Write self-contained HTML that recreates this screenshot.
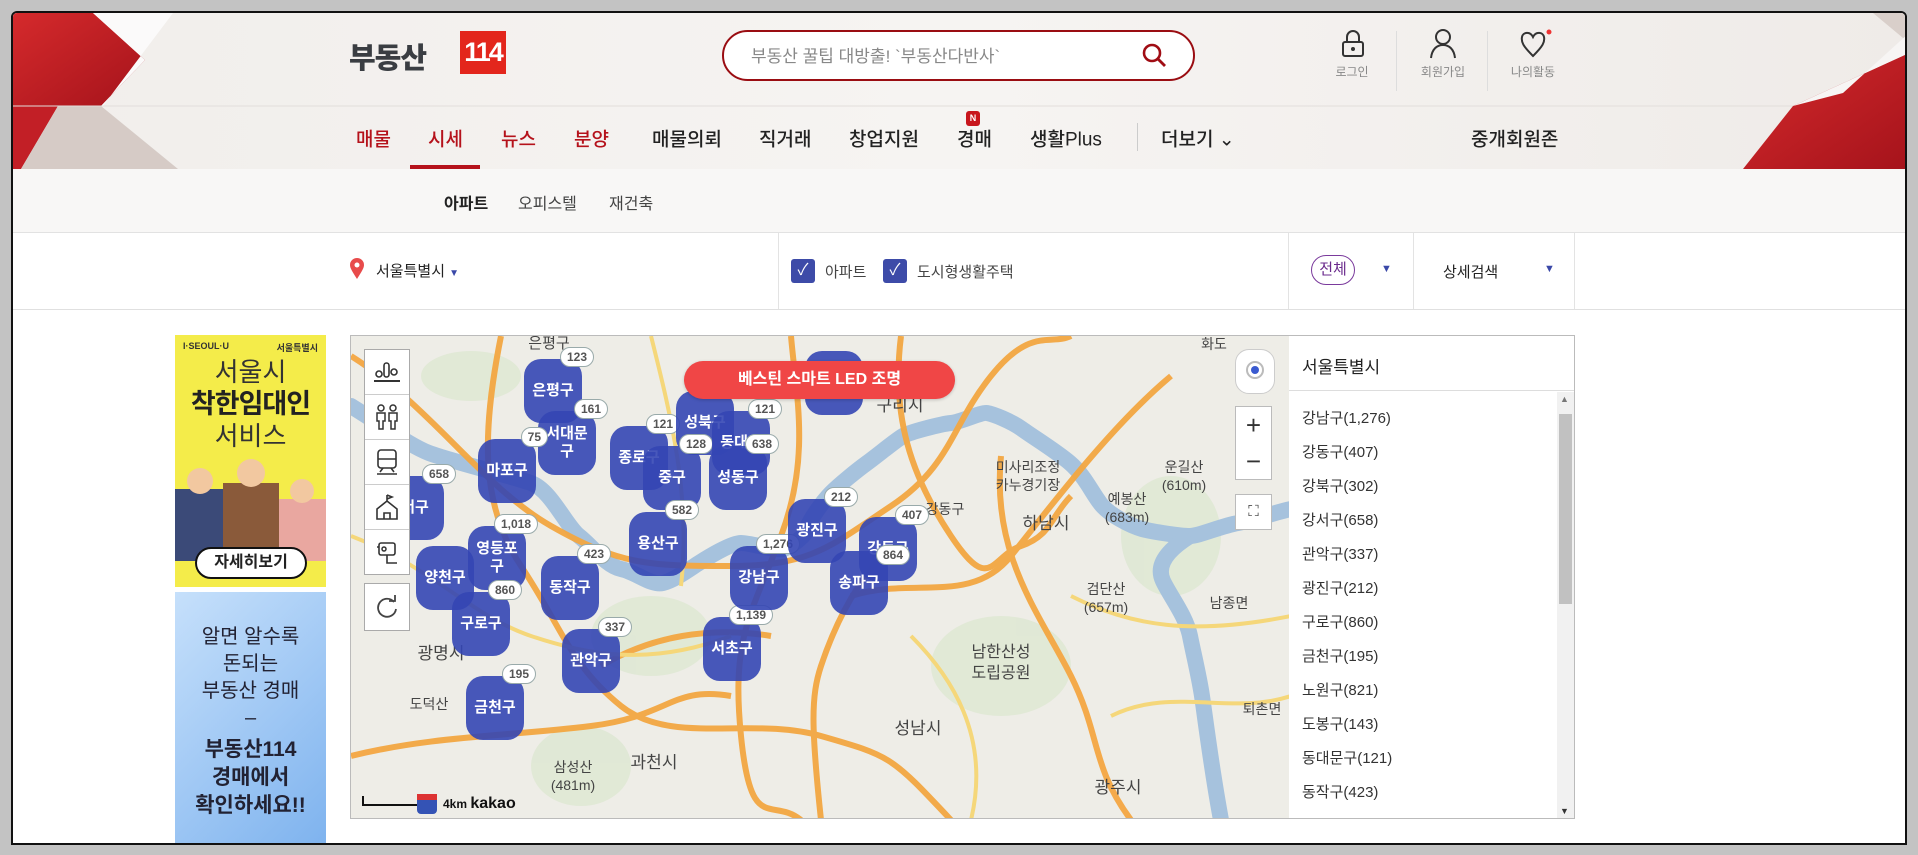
<!DOCTYPE html>
<html><head><meta charset="utf-8">
<style>
*{margin:0;padding:0;box-sizing:border-box}
body{width:1918px;height:855px;background:#c3c3c3;font-family:"Liberation Sans","Noto Sans CJK KR",sans-serif;position:relative;overflow:hidden;color:#222}
.abs{position:absolute}
#page{position:absolute;left:11px;top:11px;width:1896px;height:834px;background:#fff;border:2px solid #111;border-radius:6px 6px 0 0;overflow:hidden}
#hdr{position:absolute;left:0;top:0;width:1896px;height:156px;background:linear-gradient(90deg,#f1eeeb,#f6f4f2 50%,#efebe8)}
.nav{position:absolute;top:125px;font-size:19px;font-weight:500;transform:translateY(-50%)}
.red{color:#b5121b}
.ic{position:absolute;text-align:center;font-size:12px;color:#888;width:60px}
.mk{position:absolute;width:58px;height:64px;background:rgba(52,70,180,.9);border-radius:17px;color:#fff;font-size:15px;font-weight:bold;display:flex;align-items:center;justify-content:center;text-align:center;line-height:18px}
.bd{position:absolute;background:#fff;border:1px solid #9aa;border-radius:11px;font-size:12px;color:#555;padding:0 6px;height:20px;line-height:18px;top:-12px;right:-12px}
.li{position:absolute;left:13px;font-size:15px;color:#333}
.mt{position:absolute;font-size:14px;color:#444;transform:translate(-50%,-50%);white-space:nowrap;text-align:center;line-height:18px}
.cb{position:absolute;width:44px;height:45px;border-bottom:1px solid #ccc;display:flex;align-items:center;justify-content:center}
</style></head><body>
<div id="page">
<div id="hdr">
 <svg class="abs" style="left:0;top:0" width="1896" height="156">
  <defs><linearGradient id="rg" x1="0" y1="0" x2="1" y2="1"><stop offset="0" stop-color="#d52a2c"/><stop offset="1" stop-color="#a5131b"/></linearGradient></defs>
  <polygon points="0,0 80,0 132,47 88,93 0,93" fill="url(#rg)"/>
  <polygon points="80,0 160,0 90,93 88,93 132,47" fill="#fbfafa"/>
  <polygon points="0,93 45,93 8,156 0,156" fill="#c21f26"/>
  <polygon points="45,93 88,93 165,156 8,156" fill="#d6cbc6"/>
  <line x1="0" y1="93" x2="1896" y2="93" stroke="#e2dedb" stroke-width="1"/>
  <polygon points="1860,0 1896,0 1896,30" fill="#d9cfca"/>
  <polygon points="1896,40 1896,156 1730,156 1780,93" fill="url(#rg)"/>
  <polygon points="1830,80 1896,20 1896,40 1780,93" fill="#f7f5f4"/>
 </svg>
 <div class="abs" style="left:336px;top:22px;font-size:29px;font-weight:900;color:#3a3d42;letter-spacing:-1px">부동산</div>
 <div class="abs" style="left:447px;top:18px;width:46px;height:43px;background:#e3261c;color:#fff;font-size:27px;font-weight:bold;text-align:center;line-height:43px;letter-spacing:-2px">114</div>
 <div class="abs" style="left:709px;top:17px;width:473px;height:51px;border:2px solid #9a0d12;border-radius:26px;background:#fff"></div>
 <div class="abs" style="left:738px;top:29px;font-size:17px;color:#888">부동산 꿀팁 대방출! `부동산다반사`</div>
 <svg class="abs" style="left:1127px;top:28px" width="30" height="30"><circle cx="12" cy="12" r="8" fill="none" stroke="#a00d14" stroke-width="2.6"/><line x1="18" y1="18" x2="25" y2="25" stroke="#a00d14" stroke-width="2.8"/></svg>
 <svg class="abs" style="left:1325px;top:15px" width="30" height="32"><path d="M9 14V9a6 6 0 0 1 12 0v5" fill="none" stroke="#333" stroke-width="2"/><rect x="5" y="14" width="20" height="14" rx="2" fill="none" stroke="#333" stroke-width="2"/><circle cx="15" cy="21" r="2" fill="#333"/></svg>
 <div class="ic" style="left:1309px;top:50px">로그인</div>
 <div class="abs" style="left:1383px;top:18px;width:1px;height:60px;background:#ddd"></div>
 <svg class="abs" style="left:1415px;top:14px" width="30" height="34"><circle cx="15" cy="10" r="7" fill="none" stroke="#333" stroke-width="2"/><path d="M3 31c1-9 6-13 12-13s11 4 12 13" fill="none" stroke="#333" stroke-width="2"/></svg>
 <div class="ic" style="left:1400px;top:50px">회원가입</div>
 <div class="abs" style="left:1474px;top:18px;width:1px;height:60px;background:#ddd"></div>
 <svg class="abs" style="left:1506px;top:15px" width="34" height="32"><path d="M14 28C4 18 2 14 3 9 4 4 11 3 14 9 17 3 24 4 25 9 26 14 24 18 14 28Z" fill="none" stroke="#333" stroke-width="2"/><circle cx="30" cy="4" r="2.5" fill="#e33"/></svg>
 <div class="ic" style="left:1490px;top:50px">나의활동</div>

 <div class="nav red" style="left:343px">매물</div>
 <div class="nav red" style="left:415px">시세</div>
 <div class="abs" style="left:397px;top:152px;width:70px;height:4px;background:#b5121b"></div>
 <div class="nav red" style="left:488px">뉴스</div>
 <div class="nav red" style="left:561px">분양</div>
 <div class="nav" style="left:639px">매물의뢰</div>
 <div class="nav" style="left:746px">직거래</div>
 <div class="nav" style="left:836px">창업지원</div>
 <div class="nav" style="left:944px">경매</div>
 <div class="abs" style="left:953px;top:98px;width:14px;height:15px;background:#c8161d;border-radius:3px;color:#fff;font-size:9px;font-weight:bold;text-align:center;line-height:15px">N</div>
 <div class="nav" style="left:1017px">생활Plus</div>
 <div class="abs" style="left:1124px;top:110px;width:1px;height:28px;background:#ccc"></div>
 <div class="nav" style="left:1148px">더보기 ⌄</div>
 <div class="nav" style="left:1458px">중개회원존</div>
</div>
<div class="abs" style="left:0;top:156px;width:1896px;height:64px;background:#f8f7f6;border-bottom:1px solid #e2e2e2"></div>
<div class="abs" style="left:431px;top:177px;font-size:16px;font-weight:bold">아파트</div>
<div class="abs" style="left:505px;top:177px;font-size:16px;color:#444">오피스텔</div>
<div class="abs" style="left:596px;top:177px;font-size:16px;color:#444">재건축</div>

<div class="abs" style="left:0;top:296px;width:1896px;height:1px;background:#e0e0e0"></div>
<svg class="abs" style="left:336px;top:245px" width="16" height="22"><path d="M8 21C3 13 1 10 1 7a7 7 0 0 1 14 0c0 3-2 6-7 14Z" fill="#e84b4b"/><circle cx="8" cy="7" r="2.5" fill="#fff"/></svg>
<div class="abs" style="left:363px;top:247px;font-size:15px">서울특별시 <span style="color:#3a48a8;font-size:10px">▼</span></div>
<div class="abs" style="left:765px;top:220px;width:1px;height:76px;background:#e3e3e3"></div>
<div class="abs" style="left:778px;top:246px;width:24px;height:24px;background:#3d4ba8;border-radius:3px;color:#fff;text-align:center;line-height:24px;font-size:16px">✓</div>
<div class="abs" style="left:812px;top:248px;font-size:15px;color:#444">아파트</div>
<div class="abs" style="left:870px;top:246px;width:24px;height:24px;background:#3d4ba8;border-radius:3px;color:#fff;text-align:center;line-height:24px;font-size:16px">✓</div>
<div class="abs" style="left:904px;top:248px;font-size:15px;color:#444">도시형생활주택</div>
<div class="abs" style="left:1275px;top:220px;width:1px;height:76px;background:#e3e3e3"></div>
<div class="abs" style="left:1298px;top:242px;width:44px;height:30px;border:1px solid #7a3a9c;border-radius:15px;color:#6a2a8c;font-size:15px;text-align:center;line-height:28px">전체</div>
<div class="abs" style="left:1368px;top:250px;color:#3a48a8;font-size:11px">▼</div>
<div class="abs" style="left:1400px;top:220px;width:1px;height:76px;background:#e3e3e3"></div>
<div class="abs" style="left:1430px;top:248px;font-size:15px">상세검색</div>
<div class="abs" style="left:1531px;top:250px;color:#3a48a8;font-size:11px">▼</div>
<div class="abs" style="left:1561px;top:220px;width:1px;height:76px;background:#e3e3e3"></div>

<!-- ads -->
<div class="abs" style="left:162px;top:322px;width:151px;height:252px;background:#f4ec4a;overflow:hidden;text-align:center">
 <div style="font-size:9px;font-weight:bold;text-align:left;padding:6px 8px;color:#333">I·SEOUL·U <span style="float:right">서울특별시</span></div>
 <div style="font-size:26px;color:#333;line-height:30px">서울시</div>
 <div style="font-size:27px;font-weight:bold;color:#222;line-height:34px;letter-spacing:-1px">착한임대인</div>
 <div style="font-size:26px;color:#333;line-height:30px">서비스</div>
 <svg width="151" height="110" style="display:block"><rect x="0" y="38" width="50" height="72" fill="#3b4a78"/><circle cx="25" cy="30" r="13" fill="#f2c8a0"/><rect x="48" y="32" width="56" height="78" fill="#8a5a3a"/><circle cx="76" cy="22" r="14" fill="#f2c8a0"/><rect x="104" y="48" width="47" height="62" fill="#e9a7a0"/><circle cx="127" cy="40" r="12" fill="#f2c8a0"/></svg>
 <div class="abs" style="left:20px;top:212px;width:112px;height:32px;background:#fff;border:2px solid #111;border-radius:16px;font-size:16px;font-weight:bold;line-height:28px">자세히보기</div>
</div>
<div class="abs" style="left:162px;top:579px;width:151px;height:260px;background:linear-gradient(135deg,#c6e0fb,#7db2ee);text-align:center;color:#223">
 <div style="margin-top:32px;font-size:20px;line-height:27px">알면 알수록<br>돈되는<br>부동산 경매<br>–</div>
 <div style="font-size:21px;font-weight:bold;line-height:28px;margin-top:4px">부동산114<br>경매에서<br>확인하세요!!</div>
</div>

<!-- map -->
<div class="abs" style="left:337px;top:322px;width:940px;height:484px;border:1px solid #bbb;overflow:hidden;background:#eeede7">
<svg width="940" height="484" style="position:absolute;left:0;top:0">
 <g fill="#dde7d2" opacity=".8"><ellipse cx="300" cy="300" rx="60" ry="40"/><ellipse cx="650" cy="330" rx="70" ry="50"/><ellipse cx="230" cy="430" rx="50" ry="40"/><ellipse cx="820" cy="200" rx="50" ry="60"/><ellipse cx="120" cy="40" rx="50" ry="25"/></g>
 <path d="M0 70 C40 95 60 110 78 117 S160 140 180 147 S215 190 228 200 S255 230 270 233 S300 250 312 247 S340 232 348 227 S380 207 390 207 S425 215 432 213 S455 200 456 193 S472 165 480 157 S505 135 516 127 S545 104 552 100 S590 88 600 87 S630 76 636 77 S660 85 671 93 S705 115 719 127 S740 155 749 167 S780 190 791 193 S830 200 839 200 S870 190 887 187 S925 176 940 173" fill="none" stroke="#a6c2dd" stroke-width="16" stroke-linecap="round"/>
 <path d="M839 200 C815 215 805 230 812 245 S835 280 839 300 S848 340 851 360 S860 430 870 484" fill="none" stroke="#a6c2dd" stroke-width="16"/>
 <g fill="none" stroke="#f3a742" stroke-width="6" opacity=".95">
  <path d="M0 20 C80 70 130 150 200 190 S300 230 380 230 S480 210 540 170 S600 90 640 40 S700 10 720 0"/>
  <path d="M150 0 C130 100 130 170 170 230 S220 330 270 370 S400 380 470 400 S540 420 600 484"/>
  <path d="M440 0 C445 60 460 120 430 200 S380 300 390 400 S420 460 450 484"/>
  <path d="M550 0 C540 80 560 140 600 200 S640 220 670 210 S700 180 720 160"/>
  <path d="M650 120 C640 220 690 280 720 340 S740 430 780 484"/>
  <path d="M0 420 C80 400 160 400 240 390 S320 350 380 360"/>
  <path d="M820 40 C760 90 700 170 660 220 S560 240 500 260"/>
  <path d="M250 330 C300 300 360 290 420 300"/>
  <path d="M540 210 C500 250 480 300 470 330 S460 390 470 484"/>
 </g>
 <g fill="none" stroke="#f5d77a" stroke-width="4"><path d="M0 200 C80 230 120 280 180 300 S300 330 380 300"/><path d="M720 260 C780 290 840 300 940 280"/><path d="M300 0 C320 80 340 160 330 250"/><path d="M760 380 C820 350 880 380 940 360"/><path d="M560 300 C600 340 640 400 620 484"/></g>
 <line x1="12" y1="469" x2="72" y2="469" stroke="#111" stroke-width="2"/><line x1="12" y1="460" x2="12" y2="470" stroke="#111" stroke-width="2"/>
 <rect x="66" y="458" width="20" height="20" rx="4" fill="#3453b5"/><rect x="66" y="458" width="20" height="6" fill="#d33"/>
</svg>
<div class="mt" style="left:198px;top:8px;font-size:15px">은평구</div>
<div class="mt" style="left:549px;top:70px;font-size:17px">구리시</div>
<div class="mt" style="left:677px;top:140px">미사리조정<br>카누경기장</div>
<div class="mt" style="left:695px;top:188px;font-size:17px">하남시</div>
<div class="mt" style="left:594px;top:173px">강동구</div>
<div class="mt" style="left:833px;top:140px">운길산<br>(610m)</div>
<div class="mt" style="left:776px;top:172px">예봉산<br>(683m)</div>
<div class="mt" style="left:755px;top:262px">검단산<br>(657m)</div>
<div class="mt" style="left:650px;top:327px;font-size:16px;line-height:21px">남한산성<br>도립공원</div>
<div class="mt" style="left:567px;top:393px;font-size:17px">성남시</div>
<div class="mt" style="left:767px;top:452px;font-size:17px">광주시</div>
<div class="mt" style="left:303px;top:427px;font-size:17px">과천시</div>
<div class="mt" style="left:90px;top:318px;font-size:17px">광명시</div>
<div class="mt" style="left:78px;top:368px">도덕산</div>
<div class="mt" style="left:222px;top:440px">삼성산<br>(481m)</div>
<div class="mt" style="left:878px;top:267px">남종면</div>
<div class="mt" style="left:911px;top:373px">퇴촌면</div>
<div class="mt" style="left:863px;top:8px">화도</div>
<div class="abs" style="left:92px;top:459px;font-size:12px;font-weight:bold;color:#111">4km <span style="font-size:16px">kakao</span></div>

<div class="mk" style="left:454px;top:15px"></div>
<div class="mk" style="left:173px;top:23px">은평구<div class="bd">123</div></div>
<div class="mk" style="left:187px;top:75px">서대문<br>구<div class="bd">161</div></div>
<div class="mk" style="left:127px;top:103px">마포구<div class="bd">75</div></div>
<div class="mk" style="left:35px;top:140px">서구<div class="bd">658</div></div>
<div class="mk" style="left:259px;top:90px">종로구<div class="bd">121</div></div>
<div class="mk" style="left:325px;top:55px">성북구</div>
<div class="mk" style="left:292px;top:110px">중구<div class="bd">128</div></div>
<div class="mk" style="left:361px;top:75px">동대문<div class="bd">121</div></div>
<div class="mk" style="left:358px;top:110px">성동구<div class="bd">638</div></div>
<div class="mk" style="left:278px;top:176px">용산구<div class="bd">582</div></div>
<div class="mk" style="left:117px;top:190px">영등포<br>구<div class="bd">1,018</div></div>
<div class="mk" style="left:65px;top:210px">양천구</div>
<div class="mk" style="left:190px;top:220px">동작구<div class="bd">423</div></div>
<div class="mk" style="left:101px;top:256px">구로구<div class="bd">860</div></div>
<div class="mk" style="left:211px;top:293px">관악구<div class="bd">337</div></div>
<div class="mk" style="left:115px;top:340px">금천구<div class="bd">195</div></div>
<div class="mk" style="left:352px;top:281px">서초구<div class="bd">1,139</div></div>
<div class="mk" style="left:379px;top:210px">강남구<div class="bd">1,276</div></div>
<div class="mk" style="left:437px;top:163px">광진구<div class="bd">212</div></div>
<div class="mk" style="left:508px;top:181px">강동구<div class="bd">407</div></div>
<div class="mk" style="left:479px;top:215px">송파구<div class="bd" style="right:-22px;top:-6px">864</div></div>

<div class="abs" style="left:333px;top:25px;width:271px;height:38px;border-radius:19px;background:#f04646;color:#fff;font-size:16px;font-weight:bold;text-align:center;line-height:38px;box-shadow:0 1px 3px rgba(0,0,0,.2)">베스틴 스마트 LED 조명</div>

<div class="abs" style="left:13px;top:13px;width:46px;height:226px;background:#fff;border:1px solid #aaa">
 <div class="cb" style="top:0"><svg width="26" height="24"><circle cx="5" cy="14" r="3" fill="none" stroke="#333" stroke-width="1.6"/><rect x="10" y="3" width="5" height="14" rx="2.5" fill="none" stroke="#333" stroke-width="1.6"/><circle cx="20" cy="12" r="3" fill="none" stroke="#333" stroke-width="1.6"/><line x1="0" y1="21" x2="26" y2="21" stroke="#333" stroke-width="2"/></svg></div>
 <div class="cb" style="top:45px"><svg width="26" height="26"><circle cx="7" cy="4" r="3" fill="none" stroke="#333" stroke-width="1.5"/><circle cx="19" cy="4" r="3" fill="none" stroke="#333" stroke-width="1.5"/><path d="M3 9h8v8H9v8H5v-8H3zM15 9h8v8h-2v8h-4v-8h-2z" fill="none" stroke="#333" stroke-width="1.5"/></svg></div>
 <div class="cb" style="top:90px"><svg width="26" height="28"><rect x="4" y="2" width="18" height="18" rx="3" fill="none" stroke="#333" stroke-width="1.6"/><line x1="4" y1="11" x2="22" y2="11" stroke="#333" stroke-width="1.5"/><path d="M6 24l3-4M20 24l-3-4M3 26h20" stroke="#333" stroke-width="1.6"/></svg></div>
 <div class="cb" style="top:135px"><svg width="26" height="28"><path d="M13 2v6M13 2l5 2-5 2M3 26V16l10-8 10 8v10zM10 26v-6h6v6" fill="none" stroke="#333" stroke-width="1.6"/></svg></div>
 <div class="cb" style="top:180px;border:none"><svg width="26" height="26"><rect x="5" y="3" width="16" height="12" rx="2" fill="none" stroke="#333" stroke-width="1.6"/><circle cx="10" cy="9" r="2" fill="none" stroke="#333" stroke-width="1.5"/><path d="M3 7h2M13 15v8h10" fill="none" stroke="#333" stroke-width="1.6"/></svg></div>
</div>
<div class="abs" style="left:13px;top:247px;width:46px;height:48px;background:#fff;border:1px solid #aaa;display:flex;align-items:center;justify-content:center"><svg width="26" height="26"><path d="M20 8A9 9 0 1 0 22 15" fill="none" stroke="#444" stroke-width="1.8"/><path d="M15 7h6V1" fill="none" stroke="#444" stroke-width="1.8"/></svg></div>

<div class="abs" style="left:884px;top:13px;width:40px;height:45px;background:#fff;border:1px solid #ccc;border-radius:14px;display:flex;align-items:center;justify-content:center"><svg width="20" height="28"><circle cx="10" cy="12" r="8" fill="none" stroke="#bbb" stroke-width="2"/><circle cx="10" cy="12" r="4" fill="#3a5ad0"/></svg></div>
<div class="abs" style="left:884px;top:70px;width:37px;height:74px;background:#fff;border:1px solid #bbb;font-size:26px;text-align:center;color:#333;line-height:36px">+<br>−</div>
<div class="abs" style="left:884px;top:158px;width:37px;height:36px;background:#fff;border:1px solid #bbb;text-align:center;line-height:34px;font-size:15px;color:#333">⛶</div>
</div>

<!-- list -->
<div class="abs" style="left:1276px;top:322px;width:286px;height:484px;border:1px solid #bbb;border-left:none;background:#fff;overflow:hidden">
 <div style="position:absolute;left:13px;top:17px;font-size:17px;color:#222">서울특별시</div>
 <div style="position:absolute;left:0;top:54px;width:286px;height:1px;background:#ddd"></div>
 <div class="li" style="top:71px">강남구(1,276)</div>
 <div class="li" style="top:105px">강동구(407)</div>
 <div class="li" style="top:139px">강북구(302)</div>
 <div class="li" style="top:173px">강서구(658)</div>
 <div class="li" style="top:207px">관악구(337)</div>
 <div class="li" style="top:241px">광진구(212)</div>
 <div class="li" style="top:275px">구로구(860)</div>
 <div class="li" style="top:309px">금천구(195)</div>
 <div class="li" style="top:343px">노원구(821)</div>
 <div class="li" style="top:377px">도봉구(143)</div>
 <div class="li" style="top:411px">동대문구(121)</div>
 <div class="li" style="top:445px">동작구(423)</div>
 <div style="position:absolute;left:268px;top:56px;width:17px;height:428px;background:#f1f1f1"></div>
 <div style="position:absolute;left:270px;top:78px;width:13px;height:190px;background:#c1c1c1"></div>
 <div style="position:absolute;left:271px;top:58px;font-size:9px;color:#777">▲</div>
 <div style="position:absolute;left:271px;top:470px;font-size:9px;color:#333">▼</div>
</div>
</div>
</body></html>
